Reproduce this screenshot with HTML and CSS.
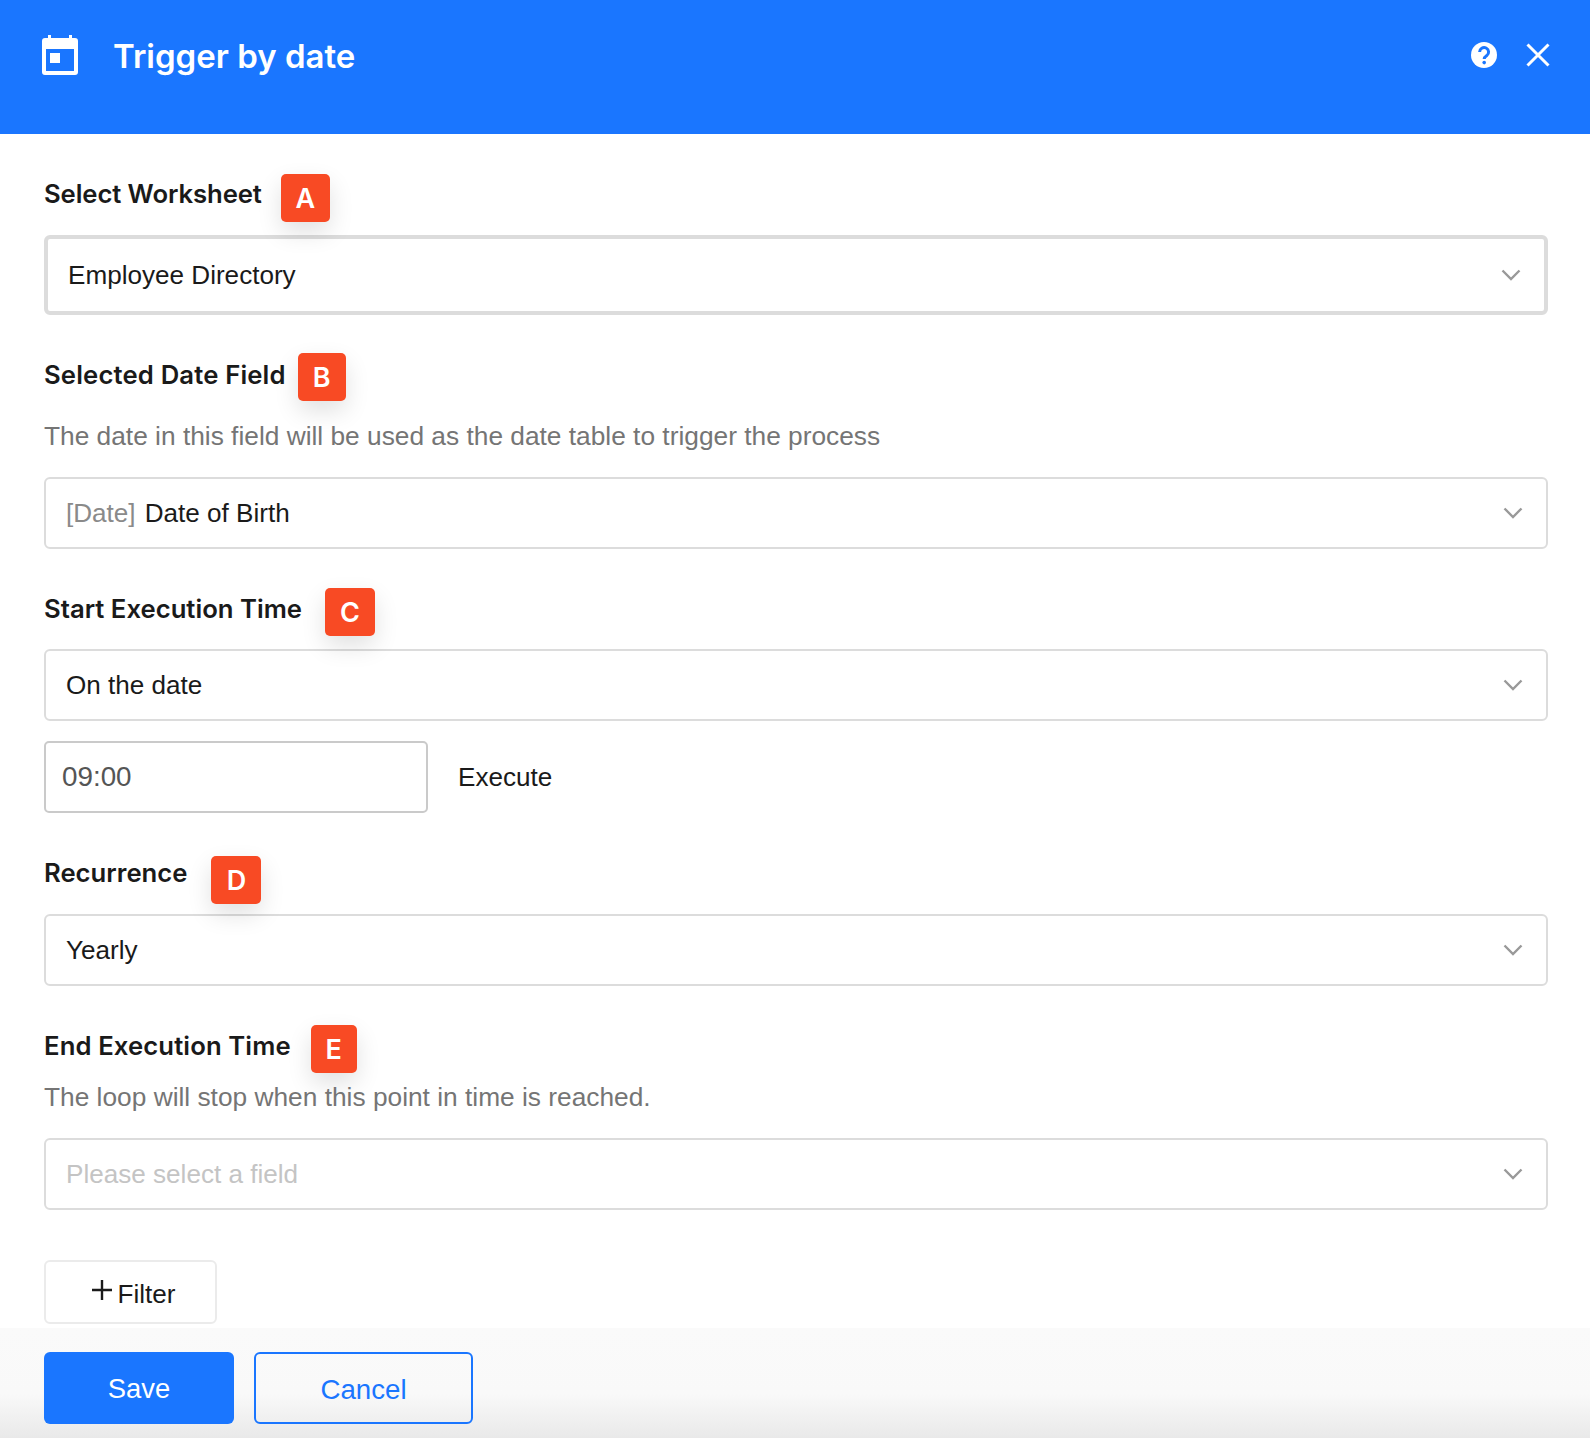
FILE: index.html
```html
<!DOCTYPE html>
<html>
<head>
	<title>Trigger by date</title>
	<meta charset="utf-8">
	<link rel="stylesheet" href="styles.css">
</head>
<body>
	<div class="panel">
		<div class="header">
			<svg class="cal_icon" width="36" height="40" viewBox="0 0 36 40">
				<path fill="#fff" fill-rule="evenodd" d="M6 0h3v3h18V0h3v3h3a3 3 0 0 1 3 3v31a3 3 0 0 1-3 3H3a3 3 0 0 1-3-3V6a3 3 0 0 1 3-3h3zM4 14v22h28V14zM8 18h10v10H8z"/>
			</svg>
			<h1>Trigger by date</h1>
			<div class="header_icons">
				<svg width="28" height="28" viewBox="0 0 28 28">
					<circle cx="14" cy="14" r="13" fill="#fff"/>
					<path d="M9.600 11a4.500 4.500 0 1 1 7.200 3.600c-1.700 1.200-2.600 1.900-2.600 3.400" fill="none" stroke="#1a76ff" stroke-width="3"/>
					<circle cx="14.200" cy="21.600" r="1.800" fill="#1a76ff"/>
				</svg>
				<svg width="24" height="24" viewBox="0 0 24 24">
					<path d="M1.500 1.500l21 21M22.500 1.500l-21 21" stroke="#fff" stroke-width="3" fill="none"/>
				</svg>
			</div>
		</div>

		<div class="content">
			<div class="label_row first">
				<span class="label">Select Worksheet</span>
				<span class="badge badge_a">A</span>
			</div>
			<div class="select thick">
				<span>Employee Directory</span>
				<svg class="arrow" width="20" height="12" viewBox="0 0 20 12"><path d="M1.500 1.500l8.500 8.500 8.500-8.500" fill="none" stroke="#999" stroke-width="2.400"/></svg>
			</div>

			<div class="label_row second">
				<span class="label">Selected Date Field</span>
				<span class="badge badge_b">B</span>
			</div>
			<p class="hint hint_b">The date in this field will be used as the date table to trigger the process</p>
			<div class="select">
				<span><span class="gray">[Date]</span>Date of Birth</span>
				<svg class="arrow" width="20" height="12" viewBox="0 0 20 12"><path d="M1.500 1.500l8.500 8.500 8.500-8.500" fill="none" stroke="#999" stroke-width="2.400"/></svg>
			</div>

			<div class="label_row third">
				<span class="label">Start Execution Time</span>
				<span class="badge badge_c">C</span>
			</div>
			<div class="select">
				<span>On the date</span>
				<svg class="arrow" width="20" height="12" viewBox="0 0 20 12"><path d="M1.500 1.500l8.500 8.500 8.500-8.500" fill="none" stroke="#999" stroke-width="2.400"/></svg>
			</div>
			<div class="time_row">
				<div class="time_input">09:00</div>
				<span>Execute</span>
			</div>

			<div class="label_row fourth">
				<span class="label">Recurrence</span>
				<span class="badge badge_d">D</span>
			</div>
			<div class="select">
				<span>Yearly</span>
				<svg class="arrow" width="20" height="12" viewBox="0 0 20 12"><path d="M1.500 1.500l8.500 8.500 8.500-8.500" fill="none" stroke="#999" stroke-width="2.400"/></svg>
			</div>

			<div class="label_row fifth">
				<span class="label">End Execution Time</span>
				<span class="badge badge_e">E</span>
			</div>
			<p class="hint hint_e">The loop will stop when this point in time is reached.</p>
			<div class="select">
				<span class="placeholder">Please select a field</span>
				<svg class="arrow" width="20" height="12" viewBox="0 0 20 12"><path d="M1.500 1.500l8.500 8.500 8.500-8.500" fill="none" stroke="#999" stroke-width="2.400"/></svg>
			</div>

			<button class="filter">
				<svg width="20" height="20" viewBox="0 0 20 20"><path d="M10 0v20M0 10h20" stroke="#1a1a1a" stroke-width="2.400" fill="none"/></svg>
				<span>Filter</span>
			</button>
		</div>

		<div class="footer">
			<button class="save">Save</button>
			<button class="cancel">Cancel</button>
		</div>
	</div>
</body>
</html>
```

FILE: styles.css
```css
* {
	box-sizing: border-box;
}

body {
	margin: 0px;
	font-family: "Liberation Sans", Arial, sans-serif;
	font-size: 26.1px;
	color: #1a1a1a;
	background: white;
}

.panel {
	width: 1590px;
	height: 1438px;
	display: flex;
	flex-direction: column;
	overflow: hidden;
}

.header {
	height: 134px;
	flex: none;
	background: #1a76ff;
	color: white;
	display: flex;
	align-items: flex-start;
	padding: 35px 40px 0px 42px;
}

.cal_icon {
	flex: none;
}

h1 {
	margin: 0px 0px 0px 35px;
	font-family: Inter, sans-serif;
	font-size: 33px;
	font-weight: 600;
	line-height: 42px;
}

.header_icons {
	margin-left: auto;
	display: flex;
	align-items: center;
	gap: 28px;
	padding-top: 6px;
}

.content {
	flex: 1;
	padding: 0px 42px 0px 44px;
}

.label_row {
	display: flex;
	align-items: flex-start;
	height: 48px;
}

.first {
	margin-top: 40px;
}

.first .label {
	letter-spacing: -0.1px;
}

.second {
	margin-top: 38px;
}

.second .label {
	line-height: 44px;
	letter-spacing: 0.15px;
}

.third {
	margin-top: 39px;
}

.third .label {
	line-height: 42px;
}

.fourth {
	margin-top: 44px;
}

.fourth .label {
	line-height: 34px;
}

.fifth {
	margin-top: 39px;
}

.fifth .label {
	line-height: 42px;
	letter-spacing: 0.1px;
}

.label {
	font-family: Inter, sans-serif;
	font-size: 25.7px;
	font-weight: 600;
	line-height: 40px;
}

.badge {
	width: 49px;
	height: 48px;
	padding-top: 1px;
	border-radius: 5px;
	background: #f84a24;
	color: white;
	font-family: Inter, sans-serif;
	font-size: 27px;
	font-weight: 600;
	line-height: 48px;
	text-align: center;
	box-shadow: 0px 10px 24px rgba(0,0,0,0.12);
}

.badge_a {
	margin-left: 19px;
}

.badge_b {
	margin-left: 12px;
	width: 48px;
}

.badge_c {
	margin-left: 23px;
	width: 50px;
}

.badge_d {
	margin-left: 24px;
	width: 50px;
}

.badge_e {
	margin-left: 20px;
	width: 46px;
}

.select {
	height: 72px;
	border: 2px solid #dcdcdc;
	border-radius: 6px;
	background: white;
	display: flex;
	align-items: center;
	justify-content: space-between;
	padding: 0px 23px 0px 20px;
}

.thick {
	height: 80px;
	border: 4px solid #dcdcdc;
	padding-left: 20px;
	padding-right: 23px;
}

.label_row + .select {
	margin-top: 13px;
}

.fourth + .select {
	margin-top: 10px;
}

.hint {
	margin: 0px;
	color: #757575;
	font-size: 26.3px;
	line-height: 40px;
}

.hint_b {
	margin-top: 15px;
	margin-bottom: 21px;
}

.hint_e {
	margin-top: 4px;
	margin-bottom: 21px;
}

.gray {
	color: #8a8a8a;
	margin-right: 9px;
}

.placeholder {
	color: #c4c4c4;
}

.time_row {
	display: flex;
	align-items: center;
	gap: 30px;
	margin-top: 20px;
	margin-bottom: -1px;
}

.time_input {
	width: 384px;
	height: 72px;
	border: 2px solid #cacaca;
	border-radius: 5px;
	padding-left: 16px;
	color: #555;
	font-size: 27.8px;
	line-height: 68px;
}

button {
	font-family: inherit;
	font-size: 26.1px;
	cursor: pointer;
}

.filter {
	display: flex;
	align-items: center;
	justify-content: center;
	gap: 6px;
	width: 173px;
	height: 64px;
	margin-top: 50px;
	background: white;
	border: 2px solid #ebebeb;
	border-radius: 6px;
	color: #1a1a1a;
	padding: 0px 0px 0px 6px;
}

.filter svg {
	margin-top: -4px;
}

.filter span {
	padding-top: 5px;
}

.footer {
	height: 110px;
	flex: none;
	background: linear-gradient(#fafafa, #f9f9f9 60%, #e9e9e9);
	padding: 24px 44px 0px 44px;
	display: flex;
	gap: 20px;
	align-items: flex-start;
}

.save {
	width: 190px;
	height: 72px;
	border: 0px;
	border-radius: 6px;
	background: #1a76ff;
	color: white;
	font-size: 27.4px;
	padding-top: 2px;
}

.cancel {
	width: 219px;
	height: 72px;
	border: 2px solid #1a76ff;
	border-radius: 6px;
	background: transparent;
	color: #1a76ff;
	font-size: 27.7px;
	padding-top: 5px;
}
```
